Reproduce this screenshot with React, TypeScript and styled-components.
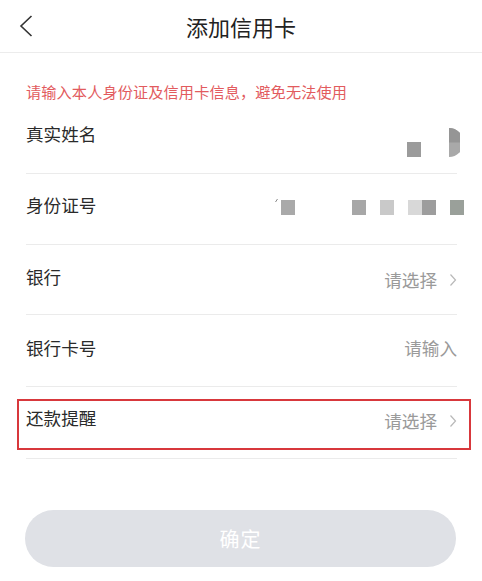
import React from "react";
import styled, { createGlobalStyle } from "styled-components";

const Global = createGlobalStyle`
  html, body { margin: 0; padding: 0; background: #fff; }
  body { font-family: "Noto Sans CJK SC", "Noto Sans", sans-serif; -webkit-font-smoothing: antialiased; }
  * { box-sizing: border-box; }
`;

const Page = styled.div`
  width: 482px;
  height: 581px;
  display: flex;
  flex-direction: column;
  background: #fff;
  overflow: hidden;
`;

const Header = styled.header`
  height: 53px;
  flex: none;
  display: grid;
  grid-template-columns: 60px 1fr 60px;
  align-items: center;
  border-bottom: 1px solid #ececec;
`;

const Back = styled.button`
  border: 0;
  background: none;
  padding: 0 0 0 19px;
  margin-top: -1px;
  display: flex;
  align-items: center;
  height: 24px;
`;

const Title = styled.h1`
  margin: 0;
  text-align: center;
  font-size: 22px;
  font-weight: 400;
  color: #222;
  line-height: 1;
`;

const Body = styled.main`
  display: flex;
  flex-direction: column;
  padding: 0 25px 0 26px;
`;

const Notice = styled.p`
  margin: 27px 0 0;
  height: 22px;
  line-height: 22px;
  font-size: 15.2px;
  color: #e25b5e;
  letter-spacing: 0.1px;
`;

const Row = styled.div<{ $h: number; $hl?: boolean }>`
  position: relative;
  height: ${(p) => p.$h}px;
  display: flex;
  align-items: center;
  justify-content: space-between;
  border-bottom: 1px solid #ebebeb;
  ${(p) =>
    p.$hl
      ? `&::after {
          content: "";
          position: absolute;
          left: -9px;
          right: -14px;
          top: 12px;
          bottom: 8px;
          border: 2px solid #d8383c;
          pointer-events: none;
        }`
      : ""}
`;

const Label = styled.span<{ $dy?: number }>`
  font-size: 17.6px;
  color: #2a2a2a;
  position: relative;
  top: ${(p) => p.$dy ?? 0}px;
`;

const Value = styled.span<{ $dy?: number }>`
  display: flex;
  align-items: center;
  gap: 12px;
  font-size: 17.6px;
  color: #9a9a9a;
  position: relative;
  top: ${(p) => p.$dy ?? 0}px;
`;

const Chevron = styled.svg`
  display: block;
`;

const Mask = styled.svg`
  display: block;
`;

const Footer = styled.div`
  flex: 1;
  display: flex;
  align-items: flex-end;
  padding: 0 26px 14px 25px;
`;

const Submit = styled.button`
  width: 100%;
  height: 57px;
  border: 0;
  border-radius: 29px;
  background: #dfe1e6;
  color: #fff;
  font-family: inherit;
  font-size: 20px;
  letter-spacing: 1px;
`;

const Arrow = () => (
  <Chevron width="8" height="14" viewBox="0 0 8 14">
    <path d="M1.5 1.5 L6.5 7 L1.5 12.5" fill="none" stroke="#b8b8b8" strokeWidth="1.2" />
  </Chevron>
);

export default function App() {
  return (
    <>
      <Global />
      <Page>
        <Header>
          <Back aria-label="返回">
            <svg width="14" height="22" viewBox="0 0 14 22">
              <path d="M12.5 1 L2 11 L12.5 21" fill="none" stroke="#333" strokeWidth="1.6" />
            </svg>
          </Back>
          <Title>添加信用卡</Title>
          <span />
        </Header>
        <Body>
          <Notice>请输入本人身份证及信用卡信息，避免无法使用</Notice>
          <Row $h={72}>
            <Label $dy={-4}>真实姓名</Label>
            <Value $dy={5}>
              <Mask width="56" height="32" viewBox="0 0 56 32" style={{ marginRight: -3 }}>
                <rect x="3" y="15" width="14" height="15" fill="#9b9b9b" />
                <path d="M45 1 A14.5 14.5 0 0 1 45 30 Z" fill="#a9a9a9" />
                <path d="M45 1 A14.5 14.5 0 0 1 59.5 15.5 L45 15.5 Z" fill="#959595" />
              </Mask>
            </Value>
          </Row>
          <Row $h={71}>
            <Label $dy={-5}>身份证号</Label>
            <Value $dy={-2}>
              <Mask width="190" height="18" viewBox="0 0 190 18" style={{ marginRight: -8 }}>
                <path d="M0.5 4 L2.5 1" stroke="#888" strokeWidth="1" />
                <rect x="6" y="2" width="14" height="15" fill="#a9a9a9" />
                <rect x="77" y="2" width="14" height="15" fill="#a7a7a7" />
                <rect x="105" y="2" width="14" height="15" fill="#c9c9c9" />
                <rect x="133" y="2" width="14" height="15" fill="#d8d8d8" />
                <rect x="147" y="2" width="14" height="15" fill="#9d9d9d" />
                <rect x="175" y="2" width="14" height="15" fill="#9aa09a" />
              </Mask>
            </Value>
          </Row>
          <Row $h={70}>
            <Label $dy={-3}>银行</Label>
            <Value $dy={0}>
              请选择
              <Arrow />
            </Value>
          </Row>
          <Row $h={72}>
            <Label $dy={-3}>银行卡号</Label>
            <Value $dy={-3}>请输入</Value>
          </Row>
          <Row $h={72} $hl>
            <Label $dy={-5}>还款提醒</Label>
            <Value $dy={-2}>
              请选择
              <Arrow />
            </Value>
          </Row>
        </Body>
        <Footer>
          <Submit>确定</Submit>
        </Footer>
      </Page>
    </>
  );
}
